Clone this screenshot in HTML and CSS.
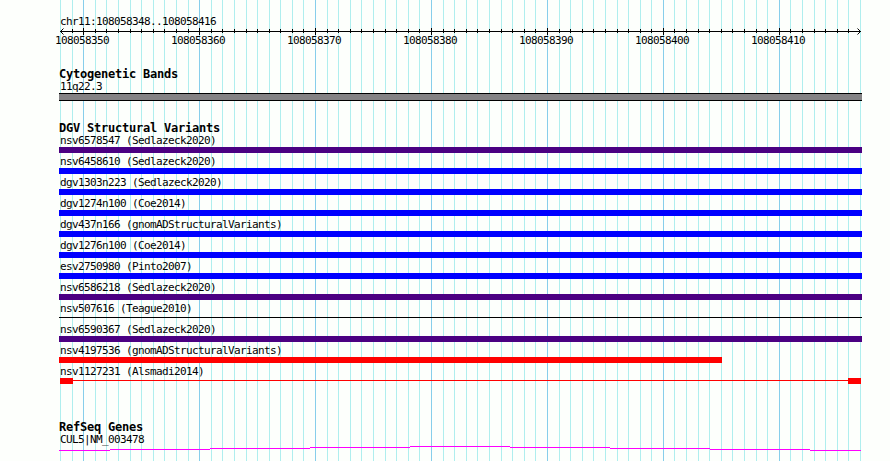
FILE: index.html
```
<!DOCTYPE HTML>
<html>
<head>
<meta charset="utf-8">
<title>chr11:108058348..108058416</title>
<link rel="stylesheet" href="styles.css">
</head>

<body>
<svg id="grid" width="890" height="461"></svg>

<div id="panel">
<div class="label region">chr11:108058348..108058416</div>
<svg id="ruler" width="890" height="9"></svg>
<div id="numbers" class="label"><span>108058350</span><span>108058360</span><span>108058370</span><span>108058380</span><span>108058390</span><span>108058400</span><span>108058410</span></div>

<h2 class="cyto">Cytogenetic Bands</h2>
<div class="label">11q22.3</div>
<div id="band"></div>

<h2 class="dgv">DGV Structural Variants</h2>
<div class="track"><div class="label">nsv6578547 (Sedlazeck2020)</div><div class="bar indigo"></div></div>
<div class="track"><div class="label">nsv6458610 (Sedlazeck2020)</div><div class="bar blue"></div></div>
<div class="track"><div class="label">dgv1303n223 (Sedlazeck2020)</div><div class="bar blue"></div></div>
<div class="track"><div class="label">dgv1274n100 (Coe2014)</div><div class="bar blue"></div></div>
<div class="track"><div class="label">dgv437n166 (gnomADStructuralVariants)</div><div class="bar blue"></div></div>
<div class="track"><div class="label">dgv1276n100 (Coe2014)</div><div class="bar blue"></div></div>
<div class="track"><div class="label">esv2750980 (Pinto2007)</div><div class="bar blue"></div></div>
<div class="track"><div class="label">nsv6586218 (Sedlazeck2020)</div><div class="bar indigo"></div></div>
<div class="track"><div class="label">nsv507616 (Teague2010)</div><div class="bar thin"></div></div>
<div class="track"><div class="label">nsv6590367 (Sedlazeck2020)</div><div class="bar indigo"></div></div>
<div class="track"><div class="label">nsv4197536 (gnomADStructuralVariants)</div><div class="bar red short"></div></div>
<div class="track"><div class="label">nsv1127231 (Alsmadi2014)</div><div class="bar ends"><i></i><b></b><i></i></div></div>

<h2 class="refseq">RefSeq Genes</h2>
<div class="label">CUL5|NM_003478</div>
<svg id="gene" width="890" height="8">
<path fill="none" stroke="#ff00ff" d="M59 4.5H110M110 3.5H210M210 2.5H310M310 1.5H410M410 .5H510M510 1.5H610M610 2.5H710M710 3.5H810M810 4.5H861"/>
</svg>
</div>

<script src="grid.js"></script>
</body>
</html>
```
FILE: styles.css
```
body {margin: 0; width: 890px; height: 461px; overflow: hidden; background: #fdfffc; color: #000; font-family: "DejaVu Sans Mono", monospace;}
svg {display: block;}
#grid {position: absolute; left: 0; top: 0;}
#panel {position: relative; padding-top: 16px;}
.label {height: 12px; padding-left: 60px; font-size: 11px; line-height: 12px; letter-spacing: -0.62px; white-space: pre;}
.region {height: 11px;}
#numbers {display: flex; padding-left: 55px; margin-top: -1px;}
#numbers span {width: 116px;}
h2 {margin: 0; height: 13px; padding-left: 59px; font-size: 12px; line-height: 13px; letter-spacing: -0.22px; font-weight: bold;}
.cyto {margin-top: 21px;}
#band {height: 6px; width: 803px; margin-left: 59px; background: #848284; border-top: 1px solid #000; border-bottom: 1px solid #000;}
.dgv {margin-top: 21px;}
.track {height: 21px;}
.bar {height: 6px; width: 803px; margin-left: 59px;}
.indigo {background: #4b0082;}
.blue {background: #0000ff;}
.red {background: #ff0000;}
.short {width: 663px;}
.thin {height: 1px; margin-top: 2px; background: #000;}
.ends {display: flex; align-items: flex-start; width: 801px; margin-left: 60px;}
.ends i {width: 13px; height: 6px; background: #ff0000;}
.ends b {flex: 1; height: 1px; margin-top: 2px; background: #ff0000;}
.refseq {margin-top: 34px;}
```
FILE: grid.js
```
var ns = "http://www.w3.org/2000/svg";
var major = [83, 199, 315, 431, 547, 663, 779];

function line(parent, x, y1, y2, color) {
    var r = document.createElementNS(ns, "rect");
    r.setAttribute("x", x);
    r.setAttribute("y", y1);
    r.setAttribute("width", 1);
    r.setAttribute("height", y2 - y1);
    r.setAttribute("fill", color);
    parent.appendChild(r);
}

var grid = document.getElementById("grid");
var ruler = document.getElementById("ruler");

for (var i = 0; i < 70; i++) {
    var x = Math.round(60 + i * 800 / 69);
    var big = major.indexOf(x) >= 0;
    line(grid, x, 0, 461, big ? "#87ceeb" : "#afeeee");
    if (i > 0 && i < 69) line(ruler, x, big ? 1 : 2, big ? 8 : 6, "#000");
}

var axis = document.createElementNS(ns, "path");
axis.setAttribute("d", "M60 4.5H861M63.5 1.5L60.5 4.5L63.5 7.5M857.5 1.5L860.5 4.5L857.5 7.5");
axis.setAttribute("fill", "none");
axis.setAttribute("stroke", "#000");
ruler.appendChild(axis);
```
